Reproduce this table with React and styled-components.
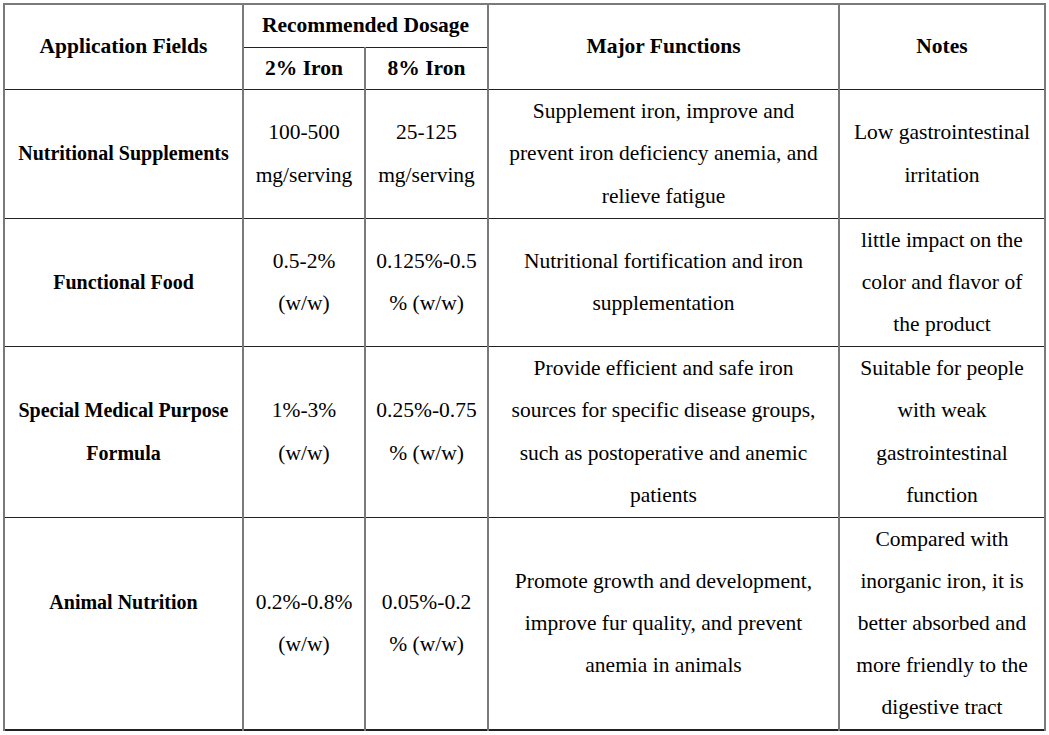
import React from "react";
import styled, { createGlobalStyle } from "styled-components";

const GlobalStyle = createGlobalStyle`
  html, body {
    margin: 0;
    padding: 0;
    background: #ffffff;
    font-family: "Liberation Serif", "Times New Roman", serif;
  }
  table, th, td {
    font-family: "Liberation Serif", "Times New Roman", serif;
  }
`;

const Page = styled.div`
  padding: 3px 0 0 3px;
  color: #000;
`;

const Table = styled.table`
  border-collapse: collapse;
  table-layout: fixed;
  width: 1041px;
  border-top: 2px solid #7a7a7a;
  border-bottom: 2px solid #222;
`;

const Cell = styled.td`
  padding: 0;
  text-align: center;
  vertical-align: middle;
  font-family: "Liberation Serif", "Times New Roman", serif;
  font-size: ${({ $size }) => $size || 21.5}px;
  font-weight: ${({ $bold }) => ($bold ? 700 : 400)};
  line-height: ${({ $lh }) => $lh || 42.2}px;
  color: #000;
  border-top: 1px solid #222;
  border-bottom: 1px solid #222;
  border-left: 2px solid #7a7a7a;
  border-right: 2px solid #7a7a7a;
  white-space: nowrap;
`;

const Row = styled.tr`
  height: ${({ $h }) => $h}px;
`;

const Lines = ({ lines }) =>
  lines.map((l, i) => (
    <React.Fragment key={i}>
      {i > 0 && <br />}
      {l || "\u00a0"}
    </React.Fragment>
  ));

const rows = [
  {
    h: 129,
    field: ["Nutritional Supplements"],
    iron2: ["100-500", "mg/serving"],
    iron8: ["25-125", "mg/serving"],
    functions: [
      "Supplement iron, improve and",
      "prevent iron deficiency anemia, and",
      "relieve fatigue",
    ],
    notes: ["Low gastrointestinal", "irritation"],
  },
  {
    h: 128,
    field: ["Functional Food"],
    iron2: ["0.5-2%", "(w/w)"],
    iron8: ["0.125%-0.5", "% (w/w)"],
    functions: ["Nutritional fortification and iron", "supplementation"],
    notes: ["little impact on the", "color and flavor of", "the product"],
  },
  {
    h: 171,
    field: ["Special Medical Purpose", "Formula"],
    iron2: ["1%-3%", "(w/w)"],
    iron8: ["0.25%-0.75", "% (w/w)"],
    functions: [
      "Provide efficient and safe iron",
      "sources for specific disease groups,",
      "such as postoperative and anemic",
      "patients",
    ],
    notes: ["Suitable for people", "with weak", "gastrointestinal", "function"],
  },
  {
    h: 212,
    field: ["Animal Nutrition", ""],
    iron2: ["0.2%-0.8%", "(w/w)"],
    iron8: ["0.05%-0.2", "% (w/w)"],
    functions: [
      "Promote growth and development,",
      "improve fur quality, and prevent",
      "anemia in animals",
    ],
    notes: [
      "Compared with",
      "inorganic iron, it is",
      "better absorbed and",
      "more friendly to the",
      "digestive tract",
    ],
  },
];

export default function App() {
  return (
    <Page>
      <GlobalStyle />
      <Table>
        <colgroup>
          <col style={{ width: 239 }} />
          <col style={{ width: 122 }} />
          <col style={{ width: 123 }} />
          <col style={{ width: 351 }} />
          <col style={{ width: 206 }} />
        </colgroup>
        <tbody>
          <Row $h={43}>
            <Cell as="th" $bold $lh={39} rowSpan={2}>
              Application Fields
            </Cell>
            <Cell as="th" $bold $lh={39} colSpan={2}>
              Recommended Dosage
            </Cell>
            <Cell as="th" $bold $lh={39} rowSpan={2}>
              Major Functions
            </Cell>
            <Cell as="th" $bold $lh={39} rowSpan={2}>
              Notes
            </Cell>
          </Row>
          <Row $h={42}>
            <Cell as="th" $bold $lh={39}>
              2% Iron
            </Cell>
            <Cell as="th" $bold $lh={39}>
              8% Iron
            </Cell>
          </Row>
          {rows.map((r) => (
            <Row key={r.field[0]} $h={r.h}>
              <Cell $bold $size={20}>
                <Lines lines={r.field} />
              </Cell>
              <Cell>
                <Lines lines={r.iron2} />
              </Cell>
              <Cell>
                <Lines lines={r.iron8} />
              </Cell>
              <Cell>
                <Lines lines={r.functions} />
              </Cell>
              <Cell>
                <Lines lines={r.notes} />
              </Cell>
            </Row>
          ))}
        </tbody>
      </Table>
    </Page>
  );
}
